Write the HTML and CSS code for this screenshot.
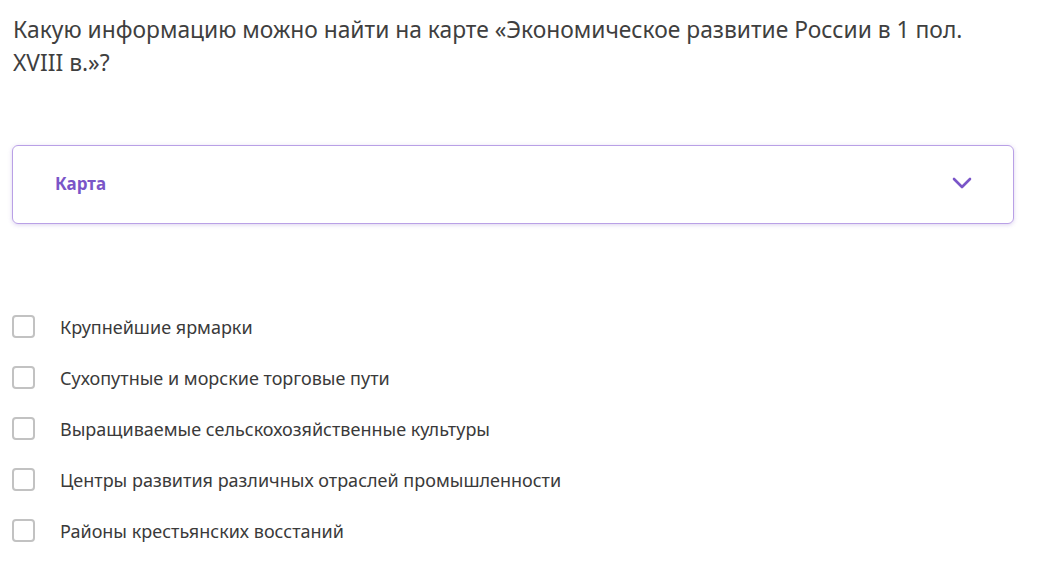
FILE: index.html
```html
<!DOCTYPE html>
<html lang="ru">
<head>
<meta charset="utf-8">
<title>Вопрос</title>
<link rel="stylesheet" href="styles.css">
</head>
<body>
<main class="task">
  <h1 class="question">Какую информацию можно найти на карте «Экономическое развитие России в 1 пол. XVIII в.»?</h1>

  <div class="dropdown">
    <span class="dropdown-label">Карта</span>
    <svg class="dropdown-chevron" width="20" height="12" viewBox="0 0 20 12" aria-hidden="true">
      <path d="M2 2 L10 10 L18 2" fill="none" stroke="#7a55c8" stroke-width="2.6" stroke-linecap="round" stroke-linejoin="round"/>
    </svg>
  </div>

  <ul class="options">
    <li class="option"><span class="checkbox"></span><span class="option-text">Крупнейшие ярмарки</span></li>
    <li class="option"><span class="checkbox"></span><span class="option-text">Сухопутные и морские торговые пути</span></li>
    <li class="option"><span class="checkbox"></span><span class="option-text">Выращиваемые сельскохозяйственные культуры</span></li>
    <li class="option"><span class="checkbox"></span><span class="option-text">Центры развития различных отраслей промышленности</span></li>
    <li class="option"><span class="checkbox"></span><span class="option-text">Районы крестьянских восстаний</span></li>
  </ul>
</main>
</body>
</html>
```

FILE: styles.css
```css
* {
  box-sizing: border-box;
}

html, body {
  margin: 0;
  padding: 0;
  background: #ffffff;
}

body {
  font-family: "Noto Sans", "Open Sans", sans-serif;
  color: #3a3a3a;
}

.task {
  padding: 13px 26px 0 12px;
}

.question {
  margin: 0 0 0 1px;
  max-width: 985px;
  font-size: 22.8px;
  font-weight: 400;
  line-height: 33px;
  color: #3f3f3f;
}

.dropdown {
  margin-top: 66px;
  height: 79px;
  border: 1.5px solid #b9a0e6;
  border-radius: 6px;
  box-shadow: 0 1px 4px rgba(140, 110, 200, 0.3);
  display: flex;
  align-items: center;
  justify-content: space-between;
  padding: 0 41px 3px 42px;
}

.dropdown-label {
  font-size: 17px;
  font-weight: 700;
  color: #7a55c8;
}

.dropdown-chevron {
  display: block;
}

.options {
  list-style: none;
  margin: 91px 0 0 0;
  padding: 0;
  display: flex;
  flex-direction: column;
  gap: 28px;
}

.option {
  display: flex;
  align-items: center;
  gap: 25px;
  height: 23px;
}

.checkbox {
  width: 23px;
  height: 23px;
  flex: none;
  border: 2px solid #c2c2c2;
  border-radius: 4px;
  background: #fff;
}

.option-text {
  font-size: 18px;
  color: #3a3a3a;
}
```
